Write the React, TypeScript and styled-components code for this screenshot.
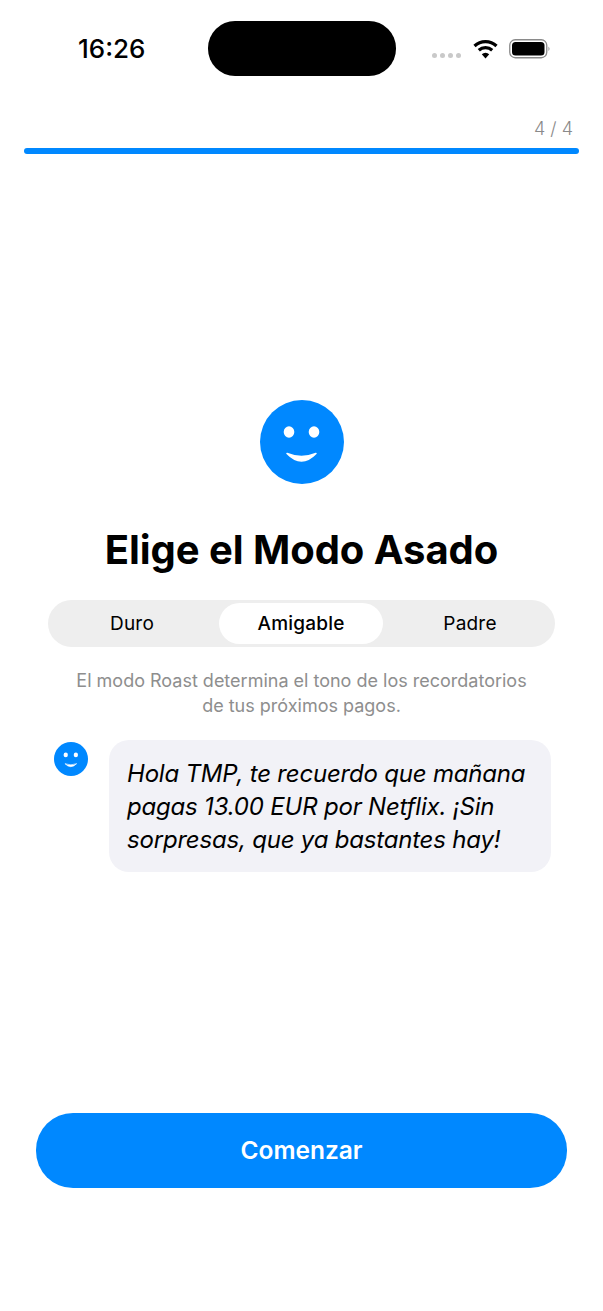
import styled, { createGlobalStyle } from "styled-components";

const BLUE = "#0088ff";

const GlobalStyle = createGlobalStyle`
  html, body {
    margin: 0;
    padding: 0;
    background: #fff;
  }
  * {
    box-sizing: border-box;
  }
`;

const Page = styled.div`
  width: 603px;
  height: 1311px;
  display: flex;
  flex-direction: column;
  align-items: stretch;
  font-family: Inter, "Liberation Sans", sans-serif;
  color: #000;
  overflow: hidden;
`;

const StatusBar = styled.div`
  display: flex;
  align-items: flex-start;
  height: 110px;
  padding-top: 21px;
`;

const Time = styled.div`
  width: 208px;
  height: 55px;
  padding-left: 78px;
  font-size: 26px;
  font-weight: 500;
  line-height: 55px;
`;

const Island = styled.div`
  width: 188px;
  height: 55px;
  border-radius: 27px;
  background: #000;
`;

const StatusIcons = styled.div`
  display: flex;
  align-items: center;
  height: 55px;
  padding-left: 36px;
`;

const Dots = styled.div`
  display: flex;
  gap: 3px;
  margin-top: 13px;
  margin-right: 12px;
`;

const Dot = styled.span`
  width: 5px;
  height: 5px;
  border-radius: 50%;
  background: #c9c9c9;
`;

const Progress = styled.div`
  display: flex;
  flex-direction: column;
  align-items: flex-end;
  padding: 7px 24px 0;
`;

const Count = styled.div`
  font-size: 18px;
  font-weight: 300;
  line-height: 24px;
  color: #8a8a8a;
  padding-right: 6px;
  margin-bottom: 7px;
`;

const Bar = styled.div`
  width: 100%;
  height: 6px;
  border-radius: 3px;
  background: ${BLUE};
`;

const Content = styled.div`
  display: flex;
  flex-direction: column;
  align-items: center;
  padding-top: 246px;
`;

const Title = styled.h1`
  margin: 41px 0 0;
  font-size: 40px;
  font-weight: 700;
  line-height: 50px;
  letter-spacing: -0.05px;
`;

const Segments = styled.div`
  display: flex;
  width: 507px;
  height: 47px;
  margin-top: 25px;
  border-radius: 24px;
  background: #eeeeee;
`;

const Segment = styled.div`
  flex: 1;
  padding: 3px 3px 3px 2px;
`;

const SegmentLabel = styled.div<{ $active?: boolean }>`
  height: 41px;
  border-radius: 21px;
  text-align: center;
  font-size: 19px;
  font-weight: ${({ $active }) => ($active ? 500 : 400)};
  letter-spacing: 0.2px;
  line-height: 41px;
  background: ${({ $active }) => ($active ? "#fff" : "transparent")};
`;

const Caption = styled.p`
  margin: 21px 0 0;
  width: 460px;
  text-align: center;
  font-size: 18px;
  line-height: 25px;
  color: #8e8e8e;
`;

const MessageRow = styled.div`
  display: flex;
  align-items: flex-start;
  align-self: flex-start;
  margin: 22px 0 0 54px;
`;

const Avatar = styled.div`
  margin-top: 2px;
  margin-right: 21px;
  height: 34px;
`;

const Bubble = styled.div`
  width: 442px;
  height: 132px;
  padding: 17px 18px;
  border-radius: 20px;
  background: #f2f2f7;
  font-size: 24px;
  font-style: italic;
  letter-spacing: -0.2px;
  line-height: 33px;
`;

const Footer = styled.div`
  margin-top: auto;
  padding: 0 36px 123px;
`;

const Button = styled.button`
  all: unset;
  display: block;
  width: 100%;
  height: 75px;
  border-radius: 37px;
  background: ${BLUE};
  color: #fff;
  text-align: center;
  font-size: 24.500px;
  font-weight: 600;
  line-height: 75px;
`;

function Smiley({ size }: { size: number }) {
  return (
    <svg width={size} height={size} viewBox="0 0 84 84" style={{ display: "block" }}>
      <circle cx="42" cy="42" r="42" fill={BLUE} />
      <ellipse cx="29" cy="32" rx="5.300" ry="5.800" fill="#fff" />
      <ellipse cx="54" cy="32" rx="5.300" ry="5.800" fill="#fff" />
      <path d="M27 53.500 Q41.500 59.500 56 53.500 Q41.500 68.500 27 53.500 Z" fill="#fff" stroke="#fff" strokeWidth="1.500" strokeLinejoin="round" />
    </svg>
  );
}

function Wifi() {
  return (
    <svg width="25" height="20" viewBox="0 0 25 20" style={{ marginRight: 11 }}>
      <path d="M1.500 7 A16 16 0 0 1 23.500 7" fill="none" stroke="#000" strokeWidth="3.200" />
      <path d="M5.800 11.200 A10 10 0 0 1 19.200 11.200" fill="none" stroke="#000" strokeWidth="3.200" />
      <path d="M12.500 19.500 L8.800 15.300 A5.200 5.200 0 0 1 16.200 15.300 Z" fill="#000" />
    </svg>
  );
}

function Battery() {
  return (
    <svg width="42" height="20" viewBox="0 0 42 20">
      <rect x="0.750" y="0.750" width="37" height="18" rx="5.500" fill="none" stroke="#8a8a8a" strokeWidth="1.300" />
      <rect x="3" y="3" width="32.500" height="13.500" rx="3.500" fill="#000" />
      <path d="M39.500 7.500 Q41.500 9.750 39.500 12 Z" fill="#8a8a8a" />
    </svg>
  );
}

export default function App() {
  return (
    <Page>
      <GlobalStyle />
      <StatusBar>
        <Time>16:26</Time>
        <Island />
        <StatusIcons>
          <Dots>
            <Dot />
            <Dot />
            <Dot />
            <Dot />
          </Dots>
          <Wifi />
          <Battery />
        </StatusIcons>
      </StatusBar>
      <Progress>
        <Count>4 / 4</Count>
        <Bar />
      </Progress>
      <Content>
        <Smiley size={84} />
        <Title>Elige el Modo Asado</Title>
        <Segments>
          <Segment>
            <SegmentLabel>Duro</SegmentLabel>
          </Segment>
          <Segment>
            <SegmentLabel $active>Amigable</SegmentLabel>
          </Segment>
          <Segment>
            <SegmentLabel>Padre</SegmentLabel>
          </Segment>
        </Segments>
        <Caption>
          El modo Roast determina el tono de los recordatorios de tus próximos pagos.
        </Caption>
        <MessageRow>
          <Avatar>
            <Smiley size={34} />
          </Avatar>
          <Bubble>Hola TMP, te recuerdo que mañana pagas 13.00 EUR por Netflix. ¡Sin sorpresas, que ya bastantes hay!</Bubble>
        </MessageRow>
      </Content>
      <Footer>
        <Button>Comenzar</Button>
      </Footer>
    </Page>
  );
}
